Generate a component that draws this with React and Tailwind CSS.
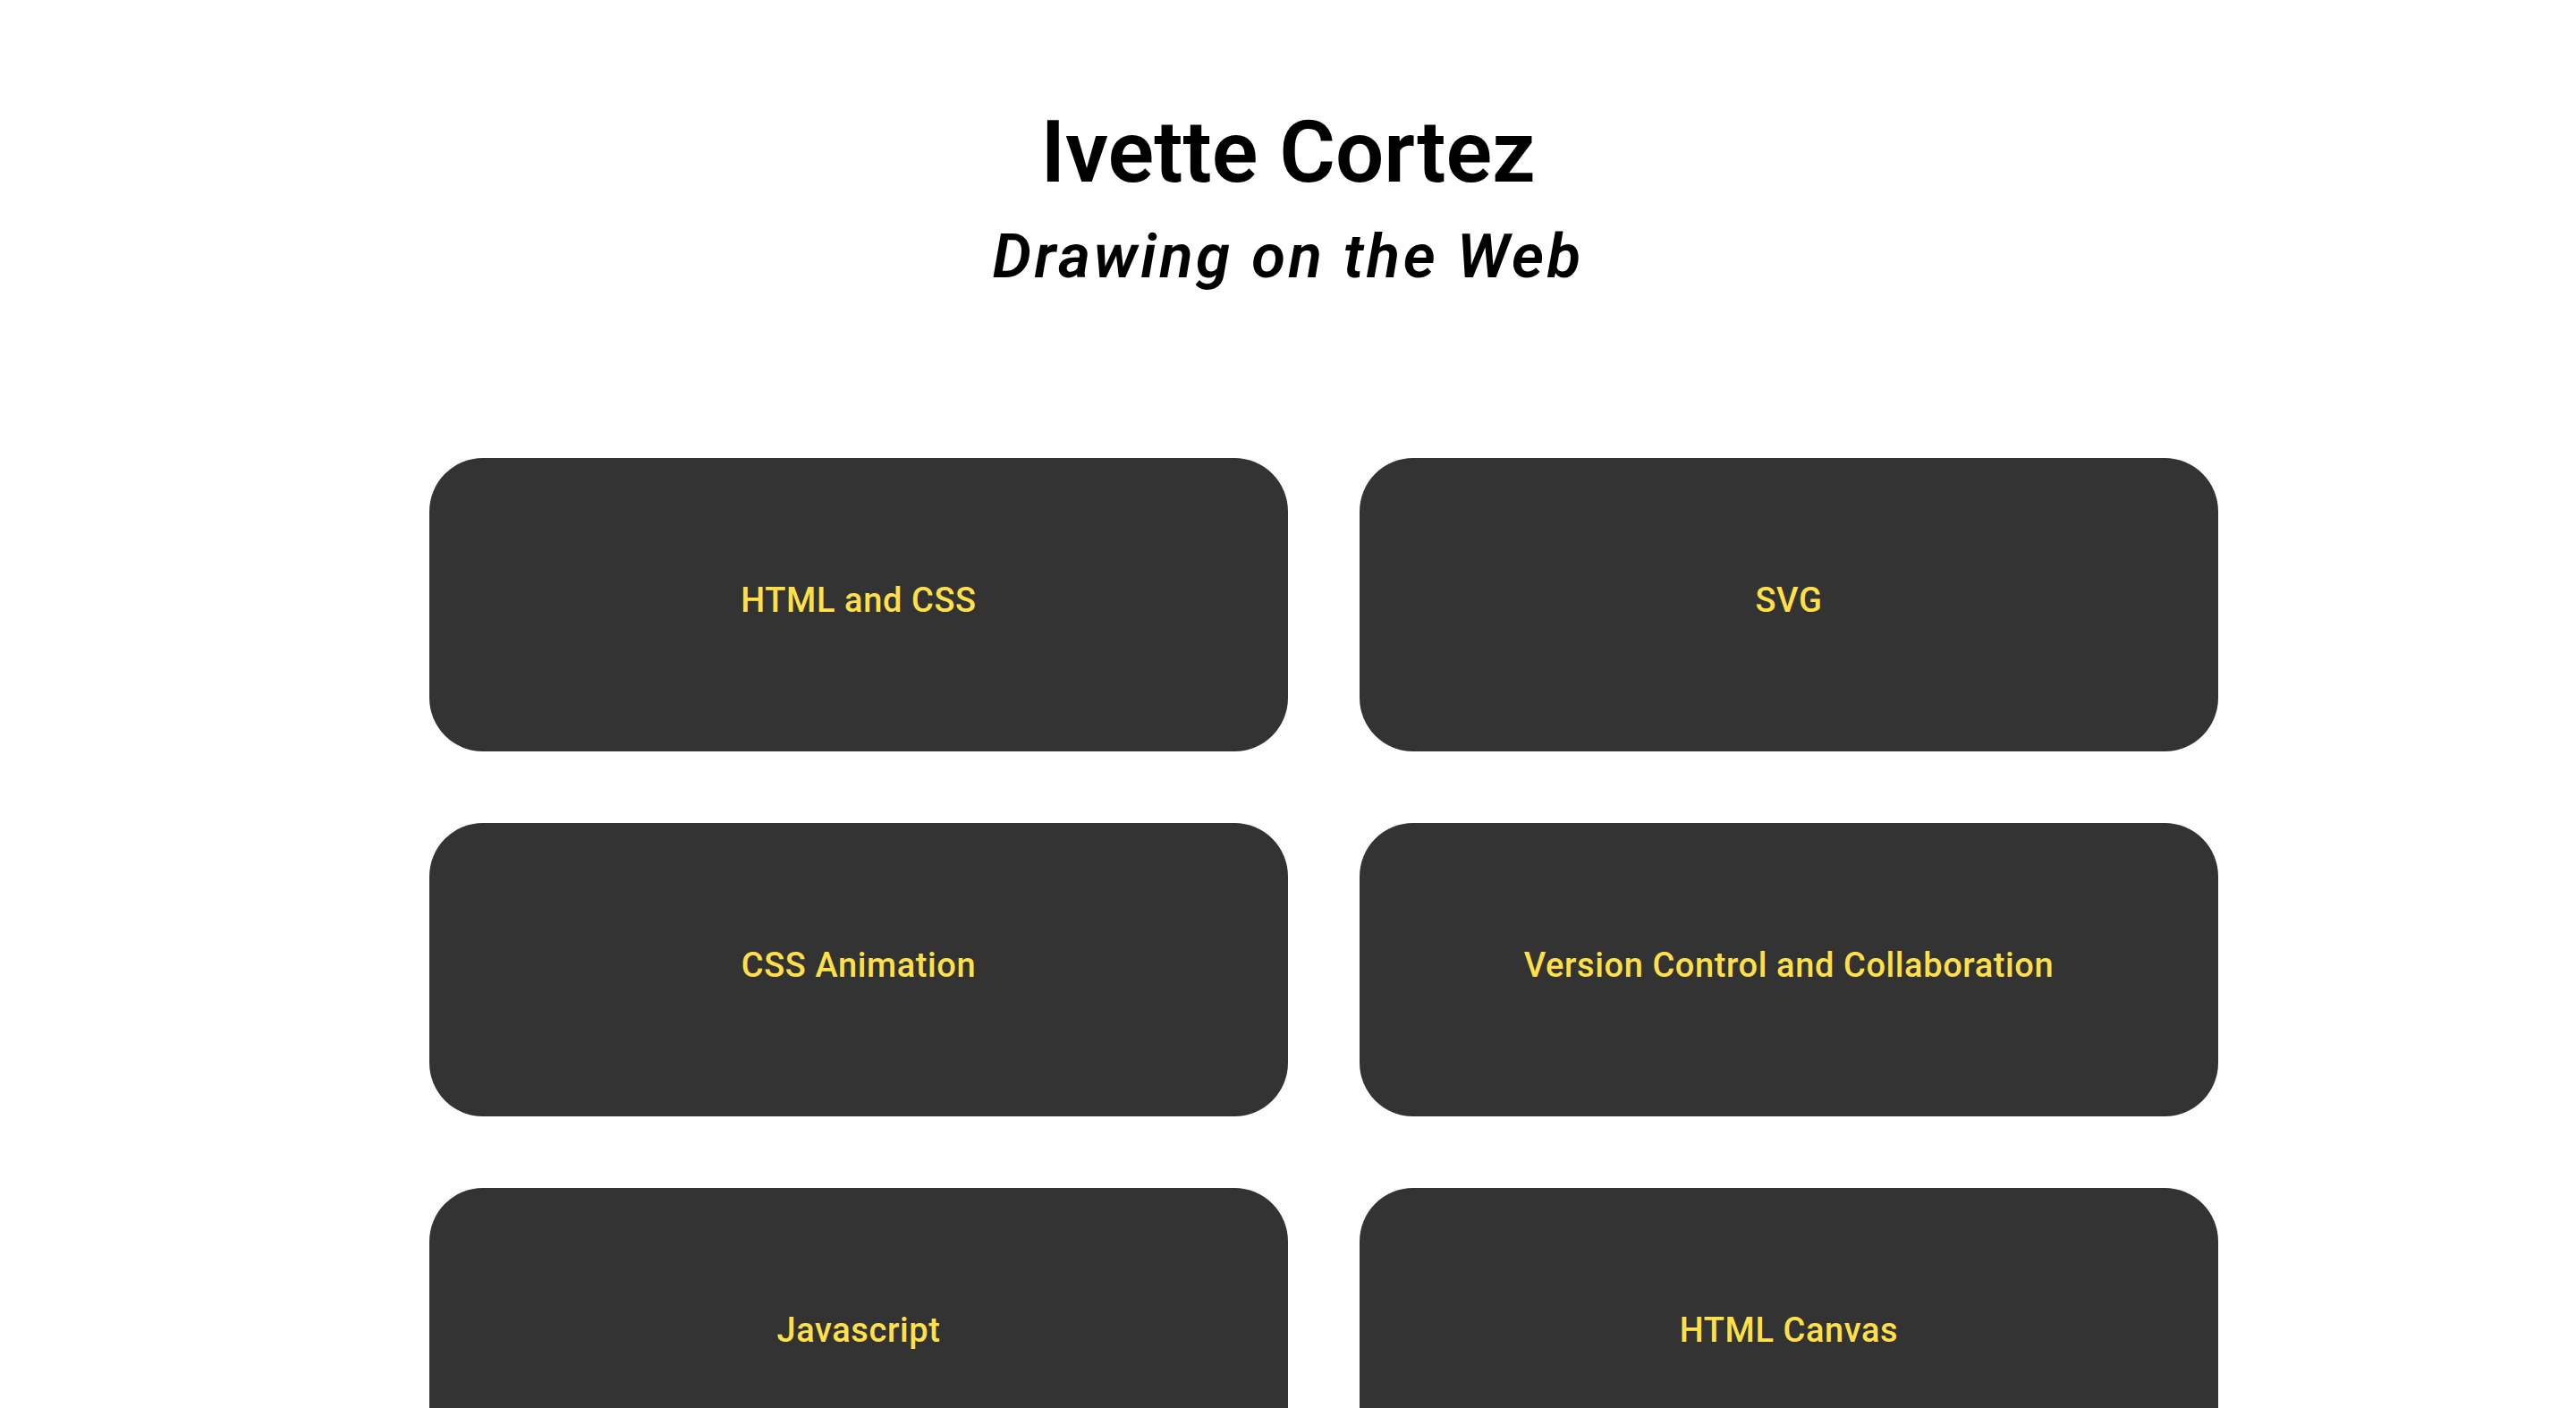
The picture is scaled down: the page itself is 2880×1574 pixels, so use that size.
export default function App() {
  const items = [
    "HTML and CSS",
    "SVG",
    "CSS Animation",
    "Version Control and Collaboration",
    "Javascript",
    "HTML Canvas",
  ];
  return (
    <div className="min-h-screen bg-white font-['Roboto',sans-serif]">
      <header className="flex flex-col items-center pt-[122px]">
        <h1 className="text-[96px] leading-none font-semibold text-black tracking-[0px]">
          Ivette Cortez
        </h1>
        <h2 className="mt-[34px] text-[69px] leading-none font-semibold italic text-black tracking-[3.5px]">
          Drawing on the Web
        </h2>
      </header>
      <main className="ml-[480px] mt-[191px] w-[2000px] grid grid-cols-2 gap-x-[80px] gap-y-[80px] pb-[80px]">
        {items.map((t) => (
          <div
            key={t}
            className="h-[328px] rounded-[60px] bg-[#333333] flex items-center justify-center pb-[9px]"
          >
            <span className="text-[38px] font-medium text-[#ffe04a] tracking-[0.6px]">{t}</span>
          </div>
        ))}
      </main>
    </div>
  );
}
